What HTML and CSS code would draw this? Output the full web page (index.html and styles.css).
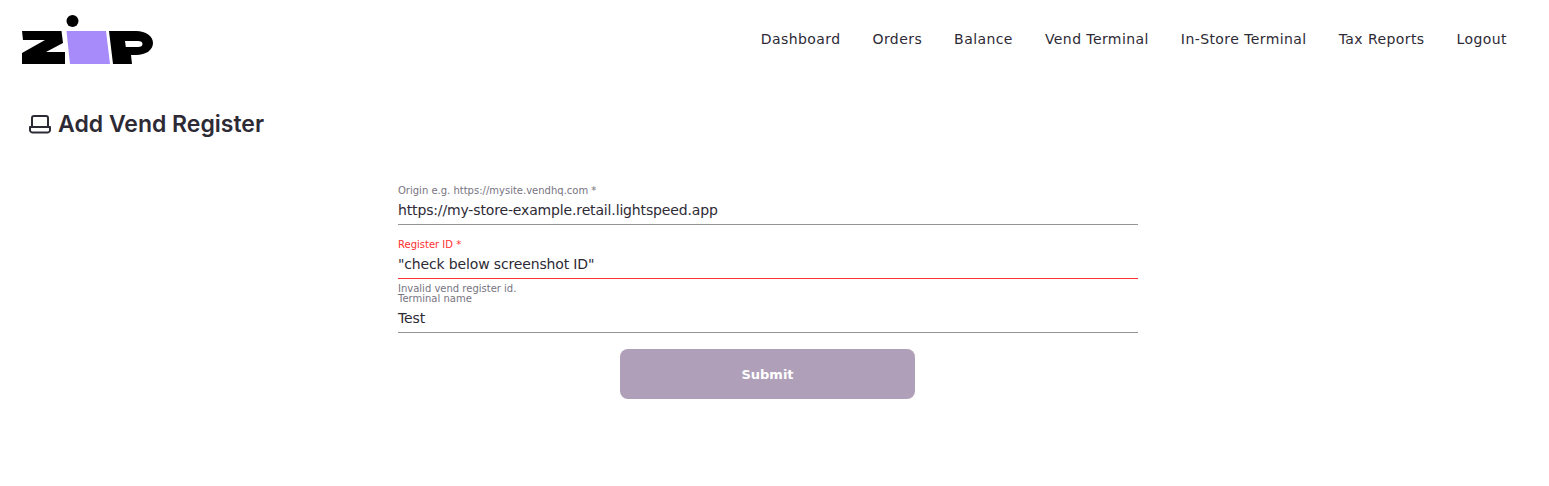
FILE: index.html
```html
<!DOCTYPE html>
<html lang="en">
<head>
  <meta charset="UTF-8">
  <meta name="viewport" content="width=device-width, initial-scale=1.0">
  <title>Add Vend Register</title>
  <link rel="stylesheet" href="styles.css">
</head>
<body>

  <!-- Top navigation -->
  <header class="topbar">
    <svg class="logo" width="132" height="50" viewBox="0 0 132 50" aria-label="Zip">
      <circle cx="50.500" cy="7" r="6" fill="#000"/>
      <path d="M0 17H39.500L41 29L24 38H43V50H0V39L23 26H1Z" fill="#000"/>
      <path d="M44.500 17H84L88 50H48Z" fill="#a78bfa"/>
      <path fill-rule="evenodd" d="M87 17H114C124 17 131 22 131 29C131 36 124 41 114 41H109L110 50H91ZM103 27L103.800 33H116C119 33 120.500 32 120.500 30C120.500 28 119 27 116 27Z" fill="#000"/>
    </svg>
    <nav class="nav">
      <a href="#">Dashboard</a>
      <a href="#">Orders</a>
      <a href="#">Balance</a>
      <a href="#">Vend Terminal</a>
      <a href="#">In-Store Terminal</a>
      <a href="#">Tax Reports</a>
      <a href="#">Logout</a>
    </nav>
  </header>

  <h1 class="page-title">
    <svg width="24" height="24" viewBox="0 0 24 24" fill="none" stroke="#2d2a36" stroke-width="2" stroke-linejoin="round" stroke-linecap="round">
      <path d="M4 15V6C4 4.800 4.800 4 6 4H18C19.200 4 20 4.800 20 6V15"/>
      <path d="M2 15H22V18C22 19.200 21 20.500 19.800 20.500H4.200C3 20.500 2 19.200 2 18Z"/>
    </svg>
    Add Vend Register
  </h1>

  <form class="register-form">
    <div class="field">
      <label>Origin e.g. https://mysite.vendhq.com *</label>
      <div class="value">https://my-store-example.retail.lightspeed.app</div>
    </div>
    <div class="field field-error">
      <label>Register ID *</label>
      <div class="value">"check below screenshot ID"</div>
      <p class="helper">Invalid vend register id.</p>
    </div>
    <div class="field field-last">
      <label>Terminal name</label>
      <div class="value">Test</div>
    </div>
    <button class="submit-btn" type="button">Submit</button>
  </form>

</body>
</html>
```

FILE: styles.css
```css
body {
  margin: 0;
  background: #fff;
  color: #2d2a36;
  font-family: "DejaVu Sans", sans-serif;
}

.topbar {
  display: flex;
  justify-content: space-between;
  align-items: flex-start;
  padding: 14px 42px 0 22px;
  height: 84px;
  box-sizing: border-box;
}

.logo {
  display: block;
}

.nav {
  display: flex;
  gap: 32px;
  padding-top: 15px;
}

.nav a {
  color: #2d2a36;
  text-decoration: none;
  font-size: 14px;
  line-height: 20px;
  letter-spacing: 0.42px;
}

.page-title {
  display: flex;
  align-items: center;
  gap: 6px;
  margin: 0;
  padding: 24px 0 0 28px;
  font-family: Inter, sans-serif;
  font-size: 23px;
  line-height: 32px;
  font-weight: 600;
  height: 32px;
}

.register-form {
  width: 740px;
  margin: 44px auto 0 398px;
  display: flex;
  flex-direction: column;
}

.field {
  margin-bottom: 13px;
}

.field label {
  display: block;
  font-size: 10px;
  line-height: 14px;
  color: #77747f;
}

.field .value {
  font-size: 14px;
  line-height: 20px;
  letter-spacing: -0.15px;
  padding: 2px 0 4px;
  border-bottom: 1px solid #949494;
}

.field-error {
  margin-bottom: 0;
}

.field-error label {
  color: #ff3030;
}

.field-error .value {
  border-bottom-color: #ff3030;
}

.helper {
  margin: 0;
  font-size: 10px;
  line-height: 14px;
  padding-top: 3px;
  height: 10px;
  color: #77747f;
}

.field-last {
  margin-bottom: 16px;
}

.submit-btn {
  align-self: center;
  width: 295px;
  height: 50px;
  margin-right: 1px;
  border: none;
  border-radius: 8px;
  background: #b09fb9;
  color: #fff;
  font-family: inherit;
  font-size: 13px;
  font-weight: 700;
}
```
